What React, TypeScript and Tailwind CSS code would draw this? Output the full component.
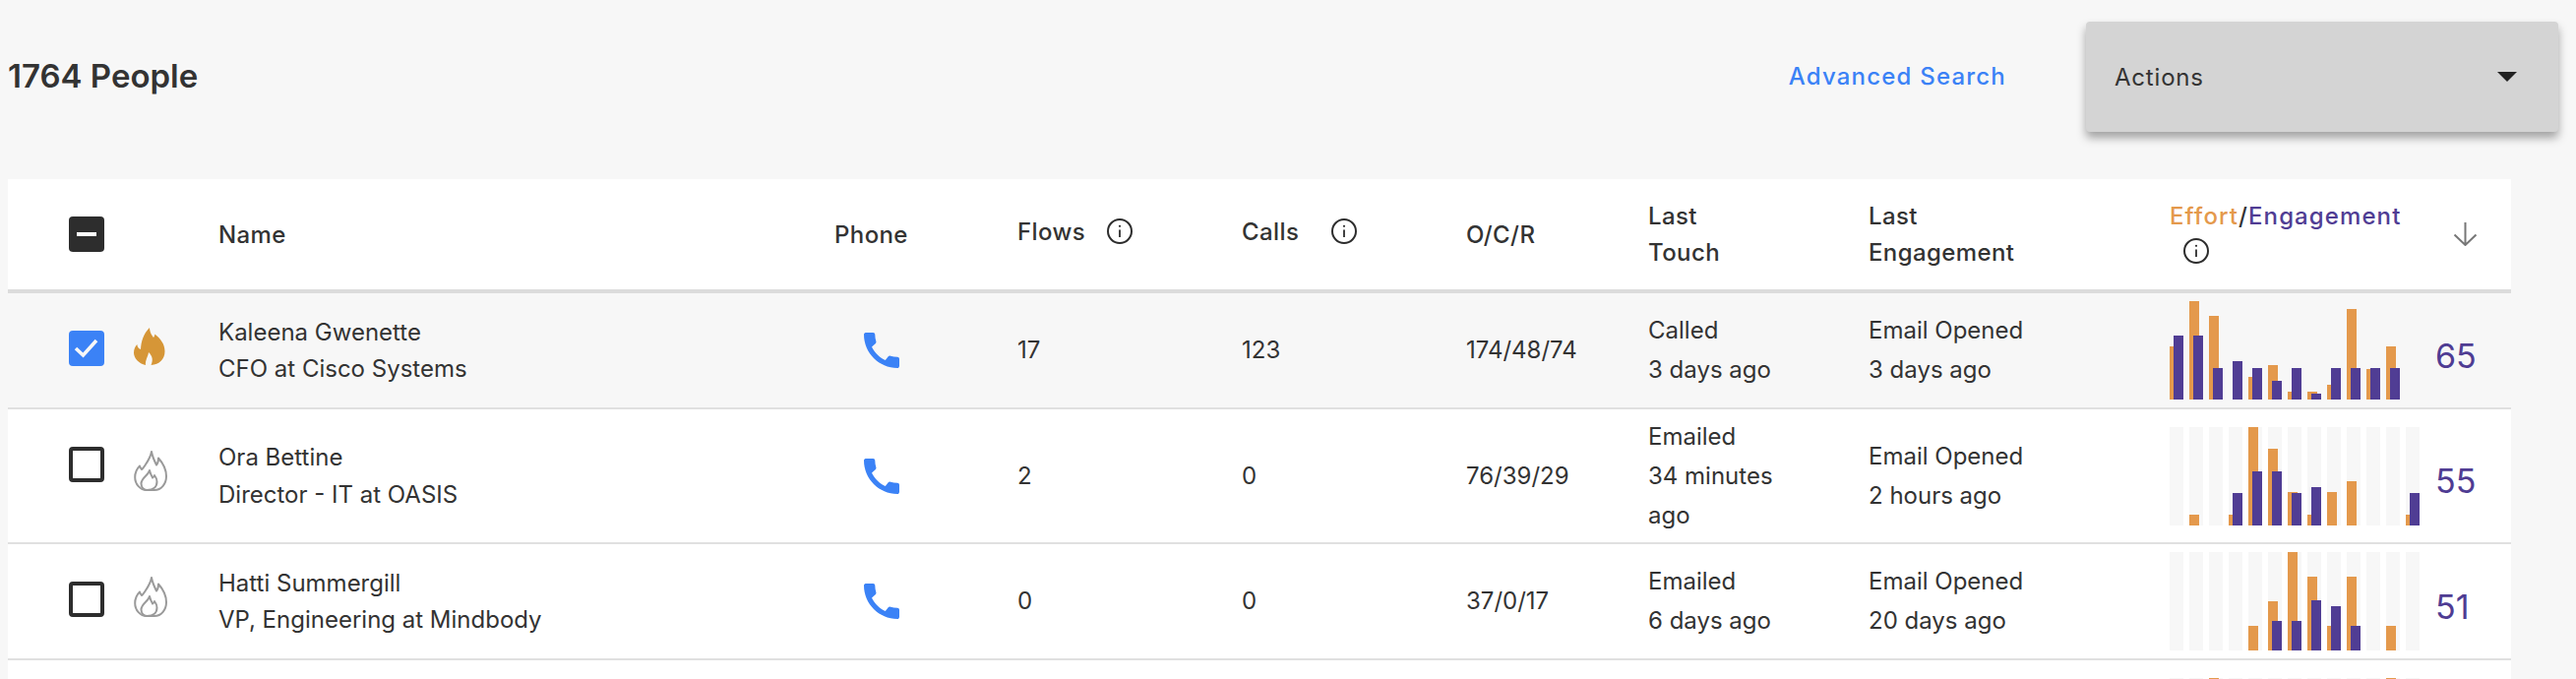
import React from 'react';

interface Person {
  name: string;
  title: string;
  flows: string;
  calls: string;
  ocr: string;
  touch: string[];
  engagement: string[];
  score: string;
  effort: number[];
  engaged: number[];
  hot?: boolean;
  height: string;
  boxGap: string;
  flameGap: string;
}

const columns = 'grid grid-cols-[214px_626px_186px_228px_228px_185px_224px_306px_347px] items-center';

const people: Person[] = [
  {
    name: 'Kaleena Gwenette',
    title: 'CFO at Cisco Systems',
    flows: '17',
    calls: '123',
    ocr: '174/48/74',
    touch: ['Called', '3 days ago'],
    engagement: ['Email Opened', '3 days ago'],
    score: '65',
    effort: [54, 100, 85, 0, 23, 35, 8, 8, 15, 92, 31, 54, 0],
    engaged: [65, 65, 32, 39, 32, 19, 32, 6, 32, 32, 32, 32, 0],
    hot: true,
    height: 'h-[118px] bg-[#f7f7f7]',
    boxGap: 'mb-[4px]',
    flameGap: 'mb-[8px]',
  },
  {
    name: 'Ora Bettine',
    title: 'Director - IT at OASIS',
    flows: '2',
    calls: '0',
    ocr: '76/39/29',
    touch: ['Emailed', '34 minutes', 'ago'],
    engagement: ['Email Opened', '2 hours ago'],
    score: '55',
    effort: [0, 11, 0, 11, 100, 78, 34, 11, 34, 45, 0, 0, 11],
    engaged: [0, 0, 0, 33, 55, 55, 33, 39, 0, 0, 0, 0, 33],
    height: 'h-[137px] bg-white',
    boxGap: 'mb-[23px]',
    flameGap: 'mb-[11px]',
  },
  {
    name: 'Hatti Summergill',
    title: 'VP, Engineering at Mindbody',
    flows: '0',
    calls: '0',
    ocr: '37/0/17',
    touch: ['Emailed', '6 days ago'],
    engagement: ['Email Opened', '20 days ago'],
    score: '51',
    effort: [0, 0, 0, 0, 25, 50, 100, 75, 25, 75, 0, 25, 0],
    engaged: [0, 0, 0, 0, 0, 30, 30, 51, 45, 25, 0, 0, 0],
    height: 'h-[118px] bg-white',
    boxGap: 'mb-[4px]',
    flameGap: 'mb-[9px]',
  },
];

function InfoIcon() {
  return (
    <svg width="26" height="26" viewBox="0 0 26 26" fill="none" stroke="#2d2d2d" strokeWidth="2">
      <circle cx="13" cy="13" r="12" />
      <path d="M13 11.5V19" strokeWidth="1.8" />
      <circle cx="13" cy="7.8" r="1.1" fill="#2d2d2d" stroke="none" />
    </svg>
  );
}

function PhoneIcon() {
  return (
    <svg width="48" height="48" viewBox="0 0 24 24" fill="#3b82f6">
      <path d="M20.01 15.38c-1.23 0-2.42-.2-3.53-.56-.35-.12-.74-.03-1.01.24l-1.57 1.97c-2.83-1.35-5.48-3.9-6.89-6.83l1.95-1.66c.27-.28.35-.67.24-1.02-.37-1.11-.56-2.3-.56-3.53 0-.54-.45-.99-.99-.99H4.19C3.65 3 3 3.24 3 3.99 3 13.28 10.73 21 20.01 21c.71 0 .99-.63.99-1.18v-3.45c0-.54-.45-.99-.99-.99z" />
    </svg>
  );
}

function HotFlame() {
  return (
    <svg width="32" height="38" viewBox="0 0 32 38" fill="#d69637">
      <path d="M16 0c.3 5 2.2 7.500 4 10 .9-1 1.300-2.200 1.300-3.500C27 11 31.500 16.500 31.500 24c0 8-5.500 13.500-14 14 2-4 2-9-2.500-13-.6 4.500-3.500 8-3 13C5 36.500 0 31 0 25.500c0-3.500 1.300-6.500 3.300-8.500.3 2.500 1.500 4.500 3.700 5C7.500 14 9.500 6.500 16 0z" />
    </svg>
  );
}

function ColdFlame() {
  return (
    <svg width="34" height="41" viewBox="0 0 34 41" fill="none" stroke="#9a9a9a" strokeWidth="2" strokeLinejoin="round">
      <path d="M18 1c-1 6-4 10-7 14.500-1 1.500-2 3-3 3.500-1-.5-1.500-2-2-3.500C3 18.500 1.200 23 1.200 27c0 7 5.300 13 11.800 13h8c7 0 12-6.500 12-14 0-8-4-14-8-18.500 0 3-.6 5.500-2 7-2-4-4-8-5-13.500z" />
      <path d="M16 20c-1 5-8.500 7.500-8.500 13.500 0 3.500 2.500 6.500 6 6.500 6 0 10-3 10-8.500 0-2.500-1-4.500-2.500-6.500-.5 1.500-1 2-2 2.500-1-2.500-2.500-4.500-3-7.500z" />
    </svg>
  );
}

function Chart({ effort, engaged }: { effort: number[]; engaged: number[] }) {
  return (
    <div className="flex gap-[6px]">
      {effort.map((value, i) => (
        <div key={i} className="flex h-[100px] w-[14px] items-end bg-[#f7f7f7]">
          <div className="w-[10px] shrink-0 bg-[#e4994c]" style={{ height: value }} />
          <div className="ml-[-6px] w-[10px] shrink-0 bg-[#503d94]" style={{ height: engaged[i] }} />
        </div>
      ))}
    </div>
  );
}

function PersonRow({ person }: { person: Person }) {
  return (
    <div className={`${columns} ${person.height} border-b-2 border-[#e0e0e0] text-[24px] text-[#333]`}>
      <div className="flex items-center pl-[62px]">
        {person.hot ? (
          <div className={`flex h-[36px] w-[36px] items-center justify-center rounded-[4px] bg-[#3b82f6] ${person.boxGap}`}>
            <svg width="28" height="24" viewBox="0 0 28 24" fill="none" stroke="#f7f7f7" strokeWidth="3.6">
              <path d="M3 12l7.500 7L24 4" />
            </svg>
          </div>
        ) : (
          <div className={`h-[36px] w-[36px] rounded-[4px] border-[4px] border-[#2d2d2d] ${person.boxGap}`} />
        )}
        <div className={`ml-[30px] ${person.flameGap}`}>{person.hot ? <HotFlame /> : <ColdFlame />}</div>
      </div>
      <div className="leading-[37.5px]">
        <div>{person.name}</div>
        <div>{person.title}</div>
      </div>
      <div className="pl-[24px]">
        <PhoneIcon />
      </div>
      <div>{person.flows}</div>
      <div>{person.calls}</div>
      <div>{person.ocr}</div>
      <div className="leading-[40px]">
        {person.touch.map((line) => (
          <div key={line}>{line}</div>
        ))}
      </div>
      <div className="leading-[40px]">
        {person.engagement.map((line) => (
          <div key={line}>{line}</div>
        ))}
      </div>
      <div className="flex items-center">
        <Chart effort={person.effort} engaged={person.engaged} />
        <div className="ml-[16px] mt-[10px] text-[34px] tracking-normal text-[#4f3c93]">{person.score}</div>
      </div>
    </div>
  );
}

export default function App() {
  return (
    <div className="h-[690px] overflow-hidden bg-[#f7f7f7] font-[Inter,sans-serif] text-[#333]">
      <div className="flex h-[182px] items-start pl-[8px] pr-[18px] pt-[22px]">
        <div className="flex h-[112px] flex-1 items-center text-[33px] font-semibold">1764 People</div>
        <div className="flex h-[112px] items-center text-[24px] font-medium tracking-[1.2px] text-[#3b82f6]">Advanced Search</div>
        <div className="ml-[81px] flex h-[112px] w-[480px] items-center justify-between rounded-[4px] bg-[#d4d4d4] pl-[29px] pr-[42px] text-[24px] tracking-[0.8px] shadow-[0_6px_10px_rgba(0,0,0,0.35)]">
          <span className="pt-[2px]">Actions</span>
          <svg width="20" height="10" viewBox="0 0 20 10" fill="#222">
            <polygon points="0,0 20,0 10,10" />
          </svg>
        </div>
      </div>

      <div className="ml-[8px] w-[2544px]">
        <div className={`${columns} h-[116px] border-b-4 border-[#dcdcdc] bg-white text-[24px] font-medium leading-[37px] tracking-[0.4px]`}>
          <div className="pl-[62px]">
            <div className="flex h-[36px] w-[36px] items-center justify-center rounded-[4px] bg-[#2d2d2d]">
              <div className="h-[4px] w-[20px] bg-white" />
            </div>
          </div>
          <div>Name</div>
          <div>Phone</div>
          <div className="flex items-center pb-[6px]">
            <span className="w-[91px]">Flows</span>
            <InfoIcon />
          </div>
          <div className="flex items-center pb-[6px]">
            <span className="w-[91px]">Calls</span>
            <InfoIcon />
          </div>
          <div>O/C/R</div>
          <div>
            <div>Last</div>
            <div>Touch</div>
          </div>
          <div>
            <div>Last</div>
            <div>Engagement</div>
          </div>
          <div className="flex items-center">
            <div className="w-[288px] pb-[8px] tracking-[1.1px]">
              <div className="mb-[4px]">
                <span className="text-[#e4994c]">Effort</span>/<span className="text-[#503d94]">Engagement</span>
              </div>
              <div className="pl-[14px]">
                <InfoIcon />
              </div>
            </div>
            <svg width="25" height="24" viewBox="0 0 25 24" fill="none" stroke="#777" strokeWidth="2">
              <path d="M12.500 0V23M1.500 12.500l11 10.500 11-10.500" />
            </svg>
          </div>
        </div>

        {people.map((person) => (
          <PersonRow key={person.name} person={person} />
        ))}

        <div className={`${columns} items-start bg-white pt-[9px] text-[24px] leading-[40px]`}>
          <div />
          <div>Tara Bell</div>
          <div />
          <div />
          <div />
          <div />
          <div>Called</div>
          <div />
          <div className="mt-[9px]">
            <Chart
              effort={[0, 0, 100, 0, 0, 0, 0, 0, 0, 0, 0, 100, 0]}
              engaged={[0, 0, 0, 0, 0, 0, 0, 0, 0, 0, 0, 0, 0]}
            />
          </div>
        </div>
      </div>
    </div>
  );
}
